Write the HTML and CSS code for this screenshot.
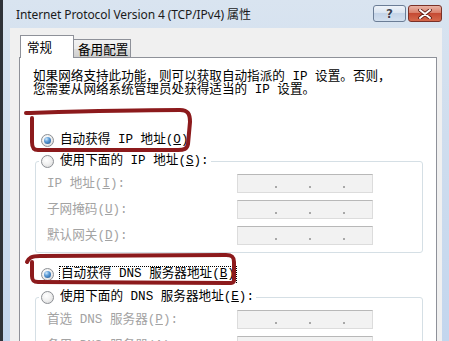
FILE: index.html
```html
<!DOCTYPE html>
<html lang="zh-CN">
<head>
<meta charset="utf-8">
<title>Internet Protocol Version 4 (TCP/IPv4) 属性</title>
<link rel="stylesheet" href="styles.css">
</head>
<body>
<div class="window">
  <div class="titlebar">
    <div class="title">Internet Protocol Version 4 (TCP/IPv4) 属性</div>
    <div class="caption-buttons">
      <div class="cbtn help"><span>?</span></div>
      <div class="cbtn close">
        <svg width="14" height="10" viewBox="0 0 14 10"><path d="M2 1 L12 9 M12 1 L2 9" stroke="#5a1a12" stroke-width="3.6" stroke-linecap="round"/><path d="M2 1 L12 9 M12 1 L2 9" stroke="#ffffff" stroke-width="2" stroke-linecap="round"/></svg>
      </div>
    </div>
  </div>
  <div class="client">
    <div class="tabs">
      <div class="tab active">常规</div>
      <div class="tab">备用配置</div>
    </div>
    <div class="panel">
      <p class="intro">如果网络支持此功能，则可以获取自动指派的 IP 设置。否则，<br>您需要从网络系统管理员处获得适当的 IP 设置。</p>

      <div class="radio-row first">
        <span class="radio checked"></span>
        <span class="rlabel">自动获得 IP 地址(<u>O</u>)</span>
      </div>

      <fieldset class="group">
        <legend>
          <span class="radio-row">
            <span class="radio"></span>
            <span class="rlabel">使用下面的 IP 地址(<u>S</u>):</span>
          </span>
        </legend>
        <div class="fields">
          <span class="flabel">IP 地址(<u>I</u>):</span>
          <span class="ipbox"><i></i><i></i><i></i></span>
          <span class="flabel">子网掩码(<u>U</u>):</span>
          <span class="ipbox"><i></i><i></i><i></i></span>
          <span class="flabel">默认网关(<u>D</u>):</span>
          <span class="ipbox"><i></i><i></i><i></i></span>
        </div>
      </fieldset>

      <div class="radio-row second">
        <span class="radio checked"></span>
        <span class="rlabel focus">自动获得 DNS 服务器地址(<u>B</u>)</span>
      </div>

      <fieldset class="group">
        <legend>
          <span class="radio-row">
            <span class="radio"></span>
            <span class="rlabel">使用下面的 DNS 服务器地址(<u>E</u>):</span>
          </span>
        </legend>
        <div class="fields">
          <span class="flabel">首选 DNS 服务器(<u>P</u>):</span>
          <span class="ipbox"><i></i><i></i><i></i></span>
          <span class="flabel">备用 DNS 服务器(<u>A</u>):</span>
          <span class="ipbox"><i></i><i></i><i></i></span>
        </div>
      </fieldset>
    </div>
  </div>
</div>
<svg class="marks" width="449" height="341" viewBox="0 0 449 341">
  <path d="M26 113 C60 112 120 110 180 110 C188 110 190 114 190 122 L188 144 C187 149 184 150 178 150 L38 150 C33 150 32 147 32 142 L32 118" fill="none" stroke="#8c1a1c" stroke-width="4" stroke-linecap="round" stroke-linejoin="round"/>
  <path d="M27 262 C29 258 31 256 40 256 L226 255 C232 255 234 257 234 262 L234 280 C234 283 232 283 228 283 L38 282 C33 282 32 280 32 276 L32 262" fill="none" stroke="#8c1a1c" stroke-width="4" stroke-linecap="round" stroke-linejoin="round"/>
</svg>
</body>
</html>
```

FILE: styles.css
```css
html, body {
  margin: 0;
  padding: 0;
}
body {
  width: 449px;
  height: 341px;
  overflow: hidden;
  position: relative;
  font-family: "Liberation Mono", "Noto Sans CJK SC", monospace;
  font-size: 12.6px;
  color: #000;
}
.window {
  height: 341px;
  box-sizing: border-box;
  border-left: 3px solid #2e3238;
  background: linear-gradient(180deg, #d9e4f0 0%, #cfddee 40%, #c3d6ee 100%);
  display: flex;
  flex-direction: column;
}
.titlebar {
  height: 28px;
  flex: none;
  display: flex;
  justify-content: space-between;
  align-items: flex-start;
  padding: 0 7px 0 13px;
}
.title {
  font-family: "Noto Sans", "Noto Sans CJK SC", sans-serif;
  font-size: 12px;
  color: #1b1b1b;
  padding-top: 6px;
  line-height: 17px;
  letter-spacing: -0.1px;
}
.caption-buttons {
  display: flex;
  gap: 2px;
  padding-top: 5px;
}
.cbtn {
  height: 17px;
  box-sizing: border-box;
  border: 1px solid #6b7d96;
  border-radius: 3px;
  display: flex;
  align-items: center;
  justify-content: center;
}
.help {
  width: 33px;
  background: linear-gradient(180deg, #eef3f9 0%, #dbe5f1 45%, #c4d4e8 50%, #d3e0ef 100%);
}
.help span {
  font-family: "DejaVu Sans", sans-serif;
  font-weight: bold;
  font-size: 12px;
  color: #3b4452;
  text-shadow: 0 0 1px #fff, 0 0 1px #fff;
  line-height: 14px;
}
.close {
  width: 34px;
  border-color: #7a3128;
  background: linear-gradient(180deg, #eab3a6 0%, #d9806b 45%, #c54a33 50%, #d5694c 100%);
}
.client {
  flex: 1;
  min-height: 0;
  margin: 0 7px 0 7px;
  background: #f0f0f0;
  padding: 7px 5px 0 9px;
  display: flex;
  flex-direction: column;
}
.tabs {
  display: flex;
  align-items: flex-end;
  height: 22px;
  flex: none;
  font-family: "Noto Sans CJK SC", sans-serif;
}
.tab {
  height: 18px;
  box-sizing: border-box;
  border: 1px solid #8e9199;
  border-bottom: none;
  background: linear-gradient(180deg, #f2f2f2 0%, #ebebeb 50%, #dddddd 51%, #cfcfcf 100%);
  padding: 0 0 0 4px;
  width: 58px;
  line-height: 18px;
  margin-left: -1px;
  color: #000;
}
.tab.active {
  position: relative;
  z-index: 1;
  height: 23px;
  width: 54px;
  margin-left: 1px;
  margin-bottom: -1px;
  background: #fff;
  padding-left: 6px;
  line-height: 22px;
}
.panel {
  flex: 1;
  background: #fff;
  border: 1px solid #8e9199;
  border-bottom: none;
  padding: 0 13px 0 13px;
}
.intro {
  margin: 13px 0 0 0;
  line-height: 12.5px;
  white-space: nowrap;
}
.radio-row {
  display: flex;
  align-items: center;
  height: 16px;
  line-height: 16px;
  white-space: nowrap;
}
.radio-row.first {
  margin: 36px 0 5px 8px;
}
.radio-row.second {
  margin: 13px 0 7px 8px;
}
.radio {
  width: 13px;
  height: 13px;
  box-sizing: border-box;
  border-radius: 50%;
  border: 1px solid #8c8f94;
  background: radial-gradient(circle at 40% 35%, #ffffff 0%, #f1f1f1 45%, #d4d4d4 100%);
  margin-right: 6px;
  flex: none;
  display: flex;
  align-items: center;
  justify-content: center;
}
.radio.checked::after {
  content: "";
  width: 7px;
  height: 7px;
  border-radius: 50%;
  background: radial-gradient(circle at 35% 30%, #cfe8fb 0%, #5b9bd6 40%, #1b4f8a 100%);
}
.rlabel.focus {
  outline: 1px dotted #000;
  outline-offset: 0;
  padding: 0 1px;
  line-height: 15px;
}
u {
  text-decoration: underline;
  text-underline-offset: 1px;
}
.group {
  margin: 0 0 0 2px;
  padding: 0;
  border: 1px solid #d5dfe5;
  border-radius: 3px;
  min-width: 0;
}
.group legend {
  padding: 0 2px;
  margin-left: 3px;
}
.group legend .radio-row {
  display: flex;
}
.fields {
  display: grid;
  grid-template-columns: 190px 136px;
  grid-auto-rows: 19px;
  row-gap: 7px;
  padding: 5px 0 7px 11px;
  align-items: center;
}
.flabel {
  color: #a3a3a3;
  white-space: nowrap;
  line-height: 16px;
}
.ipbox {
  height: 19px;
  box-sizing: border-box;
  border: 1px solid #dcdcdc;
  border-top-color: #b8b8b8;
  background: #f2f2f2;
  display: flex;
  align-items: flex-end;
  padding: 0 0 4px 37px;
  gap: 32px;
}
.ipbox i {
  width: 2px;
  height: 2px;
  background: #a8a8a8;
  display: block;
}
.marks {
  position: absolute;
  left: 0;
  top: 0;
  pointer-events: none;
}
```
